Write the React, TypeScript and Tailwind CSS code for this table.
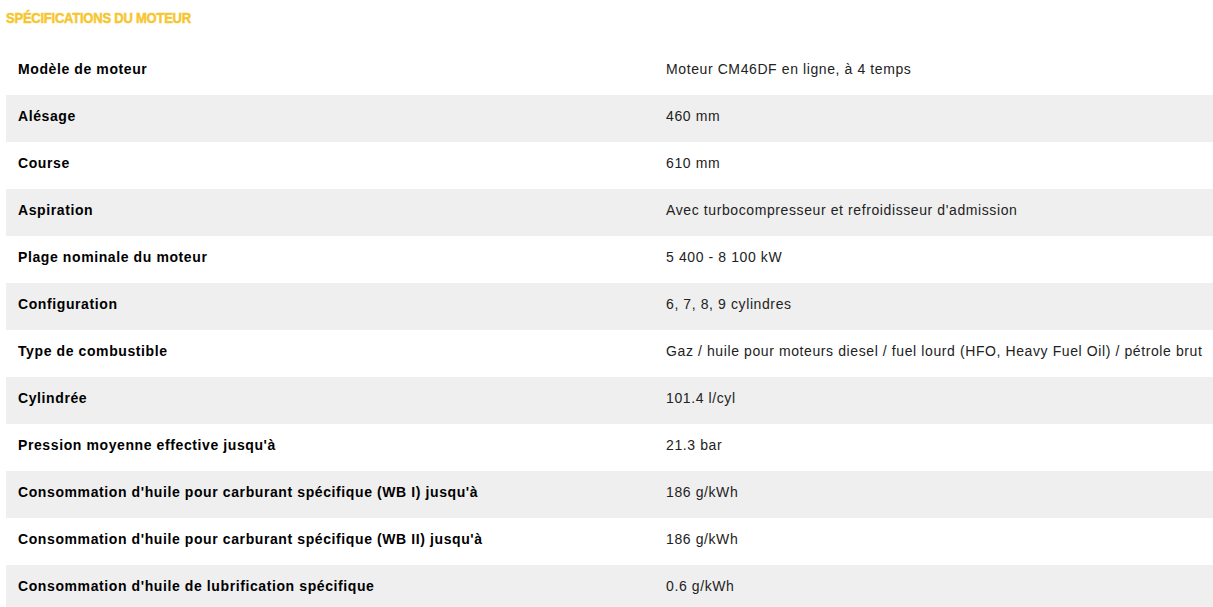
import React from 'react';

const SPECS: [string, string][] = [
  ['Modèle de moteur', 'Moteur CM46DF en ligne, à 4 temps'],
  ['Alésage', '460 mm'],
  ['Course', '610 mm'],
  ['Aspiration', "Avec turbocompresseur et refroidisseur d'admission"],
  ['Plage nominale du moteur', '5 400 - 8 100 kW'],
  ['Configuration', '6, 7, 8, 9 cylindres'],
  ['Type de combustible', 'Gaz / huile pour moteurs diesel / fuel lourd (HFO, Heavy Fuel Oil) / pétrole brut'],
  ['Cylindrée', '101.4 l/cyl'],
  ["Pression moyenne effective jusqu'à", '21.3 bar'],
  ["Consommation d'huile pour carburant spécifique (WB I) jusqu'à", '186 g/kWh'],
  ["Consommation d'huile pour carburant spécifique (WB II) jusqu'à", '186 g/kWh'],
  ["Consommation d'huile de lubrification spécifique", '0.6 g/kWh'],
];

export default function App() {
  return (
    <div className="w-[1213px] h-[607px] overflow-hidden bg-white font-['Liberation_Sans',Arial,sans-serif]">
      <div className="pl-[6px] pt-[10px] h-[48px]">
        <h2 className="text-[15px] leading-[16px] font-bold uppercase text-[#f7c62f] [-webkit-text-stroke:0.5px_#f7c62f] tracking-[-0.3px] [transform:scaleX(0.87)] origin-left whitespace-nowrap">
          Spécifications du moteur
        </h2>
      </div>

      {/* Table */}
      <div className="ml-[6px] flex flex-col">
        {SPECS.map(([label, value], i) => (
          <div
            key={label}
            className={
              'flex h-[47px] items-center pb-[5px] text-[14px] tracking-[0.6px] ' +
              (i % 2 === 1 ? 'bg-[#efefef]' : 'bg-white')
            }
          >
            <div className="w-[648px] pl-3 font-bold text-black whitespace-nowrap">{label}</div>
            <div className="pl-3 text-[#222] whitespace-nowrap">{value}</div>
          </div>
        ))}
      </div>
    </div>
  );
}
